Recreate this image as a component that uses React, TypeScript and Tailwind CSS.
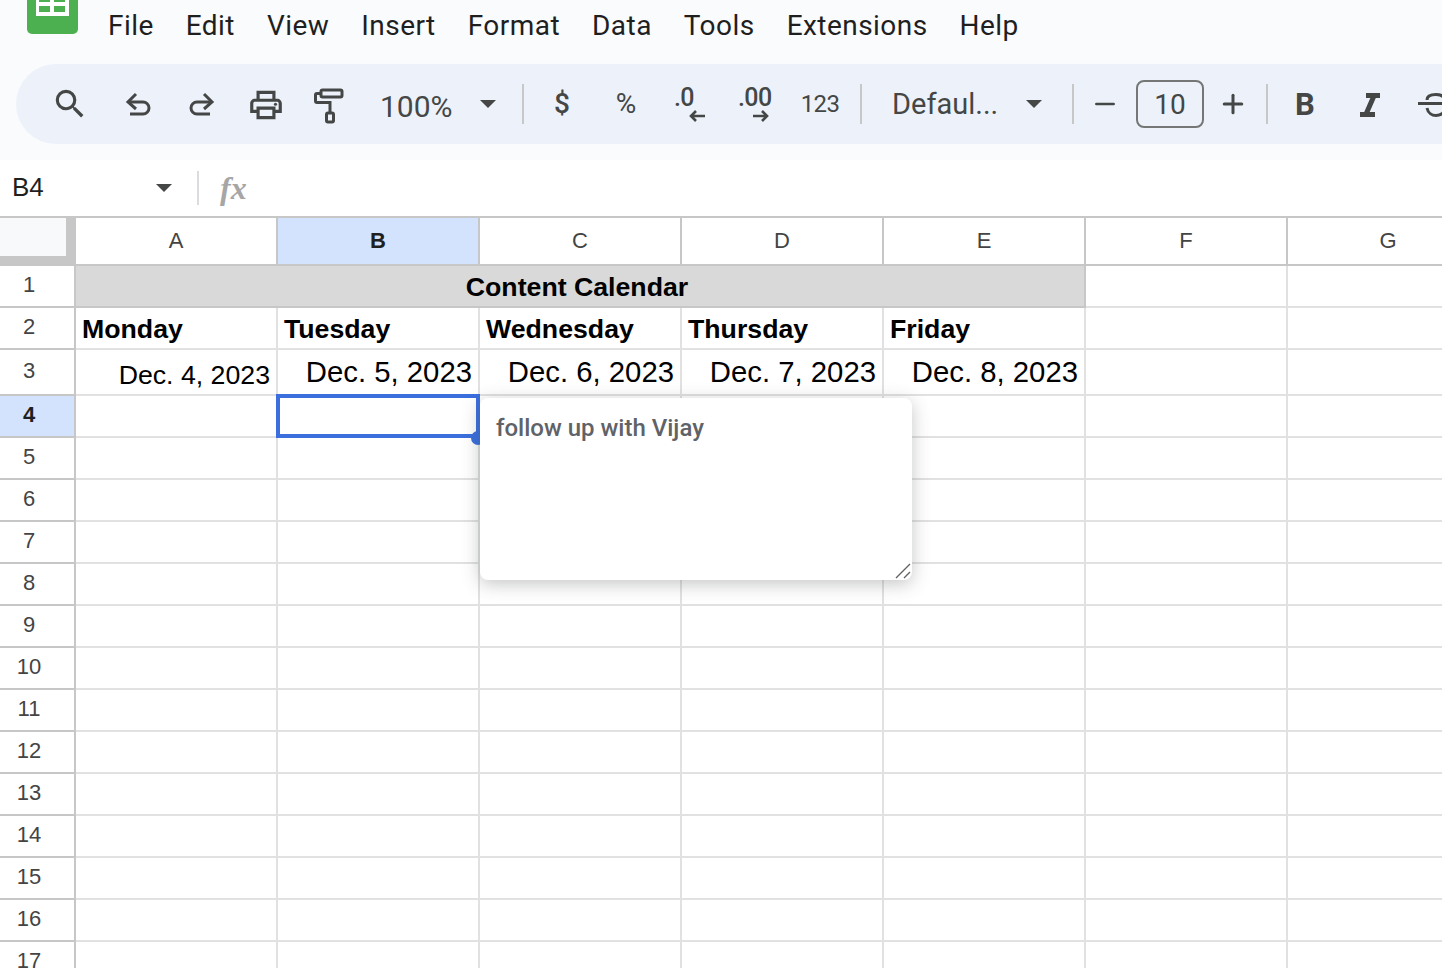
import React from 'react'
import { Plus, Minus } from 'lucide-react'

const menus = ['File', 'Edit', 'View', 'Insert', 'Format', 'Data', 'Tools', 'Extensions', 'Help']
const columns = ['A', 'B', 'C', 'D', 'E', 'F', 'G']
const weekdays = ['Monday', 'Tuesday', 'Wednesday', 'Thursday', 'Friday']
const dates = ['Dec. 4, 2023', 'Dec. 5, 2023', 'Dec. 6, 2023', 'Dec. 7, 2023', 'Dec. 8, 2023']
const emptyRows = [5, 6, 7, 8, 9, 10, 11, 12, 13, 14, 15, 16, 17]

function Caret({ className }: { className?: string }) {
  return (
    <svg width="16" height="8" viewBox="0 0 16 8" className={className}>
      <path d="M0 0h16L8 8z" fill="#444746" />
    </svg>
  )
}

function Sep({ className }: { className?: string }) {
  return <div className={`w-[2px] h-[40px] bg-[#c7c7c7] shrink-0 ${className ?? ''}`} />
}

function ToolIcon({ children }: { children: React.ReactNode }) {
  return (
    <svg width="36" height="36" viewBox="0 0 36 36" fill="none" stroke="#444746" strokeWidth="3">
      {children}
    </svg>
  )
}

function Slot({ className, children }: { className: string; children: React.ReactNode }) {
  return <div className={`h-full flex items-center justify-center shrink-0 ${className}`}>{children}</div>
}

function Logo() {
  return (
    <svg width="51" height="50" viewBox="0 0 51 50" className="shrink-0 self-start -mt-[16px]">
      <path d="M0 0h51v45a5 5 0 0 1-5 5H5a5 5 0 0 1-5-5z" fill="#4caf50" />
      <rect x="9" y="0" width="33" height="32" fill="#fff" />
      <rect x="12" y="10" width="11" height="8" fill="#4caf50" />
      <rect x="27" y="10" width="11" height="8" fill="#4caf50" />
      <rect x="12" y="22" width="11" height="6" fill="#4caf50" />
      <rect x="27" y="22" width="11" height="6" fill="#4caf50" />
    </svg>
  )
}

function DecimalIcon({ label, arrow }: { label: string; arrow: 'left' | 'right' }) {
  return (
    <div className="w-[32px] pt-[2px] flex flex-col items-start">
      <span className="text-[25px] leading-[22px] font-medium text-[#444746] tracking-tight whitespace-nowrap">{label}</span>
      <svg width="18" height="14" viewBox="0 0 18 14" className="ml-[14px]" fill="none" stroke="#444746" strokeWidth="2.6">
        {arrow === 'left' ? <path d="M17 7H3M8 2 3 7l5 5" /> : <path d="M1 7h14M10 2l5 5-5 5" />}
      </svg>
    </div>
  )
}

function Toolbar() {
  return (
    <div className="ml-[16px] h-[80px] rounded-l-[40px] bg-[#edf2fa] flex items-center pl-[22px] overflow-hidden text-[#444746]">
      <Slot className="w-[64px] mr-[4px]">
        <svg width="38" height="38" viewBox="0 0 24 24" fill="#444746">
          <path d="M15.5 14h-.79l-.28-.27A6.471 6.471 0 0 0 16 9.5 6.5 6.5 0 1 0 9.5 16c1.61 0 3.09-.59 4.23-1.57l.27.28v.79l5 4.99L20.49 19l-4.99-5zm-6 0C7.01 14 5 11.99 5 9.5S7.01 5 9.5 5 14 7.01 14 9.5 11.99 14 9.5 14z" />
        </svg>
      </Slot>
      <Slot className="w-[64px] pt-[4px]">
        <ToolIcon>
          <path d="M16 6 8 14l8 7" />
          <path d="M9 14h14a5.5 5.5 0 0 1 0 12H10" />
        </ToolIcon>
      </Slot>
      <Slot className="w-[64px] pt-[4px]">
        <ToolIcon>
          <path d="M20 6l8 8-8 7" />
          <path d="M27 14H13a5.5 5.5 0 0 0 0 12h13" />
        </ToolIcon>
      </Slot>
      <Slot className="w-[64px] pt-[2px]">
        <svg width="38" height="38" viewBox="0 0 24 24" fill="#444746">
          <path d="M19 8h-1V3H6v5H5c-1.66 0-3 1.34-3 3v6h4v4h12v-4h4v-6c0-1.66-1.34-3-3-3zM8 5h8v3H8V5zm8 12v2H8v-4h8v2zm2-2v-2H6v2H4v-4c0-.55.45-1 1-1h14c.55 0 1 .45 1 1v4h-2z" />
          <circle cx="18" cy="11.5" r="1" />
        </svg>
      </Slot>
      <Slot className="w-[62px] pt-[4px]">
        <svg width="32" height="36" viewBox="0 0 32 36" fill="none" stroke="#444746" strokeWidth="3">
          <rect x="8" y="2" width="21" height="7" rx="1.5" />
          <path d="M8 5.5H4a1.5 1.5 0 0 0-1.5 1.5v6A1.5 1.5 0 0 0 4 14.5h13V25" />
          <rect x="13.5" y="25" width="7" height="9" rx="1.5" />
        </svg>
      </Slot>
      <span className="ml-[20px] w-[73px] shrink-0 text-[30px] leading-none pt-[6px] whitespace-nowrap">100%</span>
      <Caret className="ml-[27px] shrink-0" />
      <Sep className="ml-[26px]" />
      <Slot className="w-[64px] ml-[6px] text-[28px] font-medium">$</Slot>
      <Slot className="w-[64px] text-[28px]">%</Slot>
      <Slot className="w-[64px]">
        <DecimalIcon label=".0" arrow="left" />
      </Slot>
      <Slot className="w-[64px]">
        <DecimalIcon label=".00" arrow="right" />
      </Slot>
      <Slot className="w-[68px] text-[24px] tracking-tight">123</Slot>
      <Sep className="ml-[6px]" />
      <span className="ml-[30px] w-[107px] shrink-0 text-[29px] leading-none whitespace-nowrap">Defaul...</span>
      <Caret className="ml-[27px] shrink-0" />
      <Sep className="ml-[30px]" />
      <Slot className="w-[62px]">
        <Minus size={30} strokeWidth={2.4} color="#444746" absoluteStrokeWidth />
      </Slot>
      <div className="w-[68px] h-[48px] shrink-0 rounded-[8px] border-2 border-[#747775] pt-[2px] flex items-center justify-center text-[28px]">
        10
      </div>
      <Slot className="w-[58px]">
        <Plus size={30} strokeWidth={3} color="#444746" absoluteStrokeWidth />
      </Slot>
      <Sep className="ml-[4px]" />
      <Slot className="w-[74px] pt-[2px] text-[31px] font-bold">B</Slot>
      <Slot className="w-[56px] pt-[2px]">
        <svg width="24" height="24" viewBox="0 0 24 24" fill="none" stroke="#444746" strokeWidth="5">
          <path d="M8 2.5h14M2 21.5h15M15.5 4 8.5 20" />
        </svg>
      </Slot>
      <Slot className="w-[68px] pt-[2px]">
        <svg width="36" height="36" viewBox="0 0 36 36" fill="none" stroke="#444746" strokeWidth="3">
          <path d="M4 16.5h32" />
          <path d="M13 13c0-4 4-5.5 9-5.5s8 1.500 9 5.500" />
          <path d="M13 21c1 5 5 7.500 9 7.500 5 0 9-3 9-7.500" />
        </svg>
      </Slot>
    </div>
  )
}

function CornerAndColumns() {
  return (
    <div className="flex h-[50px] border-t-2 border-[#c7c7c7] font-['Liberation_Sans',sans-serif] text-[22px]">
      <div className="w-[76px] shrink-0 bg-[#c7c7c7] pr-[10px] pb-[10px]">
        <div className="h-full bg-[#f8f9fa]" />
      </div>
      {columns.map((col) => (
        <div
          key={col}
          className={
            col === 'B'
              ? 'w-[202px] shrink-0 pb-[2px] flex items-center justify-center bg-[#d3e3fd] font-bold text-[#1f1f1f] border-r-2 border-b-2 border-[#c7c7c7]'
              : 'w-[202px] shrink-0 pb-[2px] flex items-center justify-center text-[#444] border-r-2 border-b-2 border-[#c7c7c7]'
          }
        >
          {col}
        </div>
      ))}
    </div>
  )
}

function RowHead({ n, active }: { n: number; active?: boolean }) {
  return (
    <div
      className={
        active
          ? "w-[76px] shrink-0 flex items-center justify-center pr-[16px] pb-[4px] bg-[#d3e3fd] font-bold text-[#1f1f1f] text-[22px] border-r-2 border-b-2 border-[#c7c7c7] font-['Liberation_Sans',sans-serif]"
          : "w-[76px] shrink-0 flex items-center justify-center pr-[16px] pb-[4px] text-[#444] text-[22px] border-r-2 border-b-2 border-[#c7c7c7] font-['Liberation_Sans',sans-serif]"
      }
    >
      {n}
    </div>
  )
}

function BlankCells({ count }: { count: number }) {
  return (
    <>
      {Array.from({ length: count }).map((_, i) => (
        <div key={i} className="w-[202px] shrink-0 border-r-2 border-b-2 border-[#e1e1e1]" />
      ))}
    </>
  )
}

function Sheet() {
  return (
    <div className="relative font-['Liberation_Sans',sans-serif] text-black">
      <CornerAndColumns />

      <div className="flex h-[42px]">
        <RowHead n={1} />
        <div className="w-[1010px] shrink-0 pr-[6px] pt-[2px] flex items-center justify-center bg-[#d9d9d9] border-r-2 border-b-2 border-[#c7c7c7] text-[26.7px] font-bold">
          Content Calendar
        </div>
        <BlankCells count={2} />
      </div>

      <div className="flex h-[42px]">
        <RowHead n={2} />
        {weekdays.map((day) => (
          <div key={day} className="w-[202px] shrink-0 pl-[6px] pt-[2px] flex items-center border-r-2 border-b-2 border-[#e1e1e1] text-[26.7px] font-bold whitespace-nowrap">
            {day}
          </div>
        ))}
        <BlankCells count={2} />
      </div>

      <div className="flex h-[46px]">
        <RowHead n={3} />
        {dates.map((date, i) => (
          <div
            key={date}
            className={
              i === 0
                ? 'w-[202px] shrink-0 pr-[6px] pt-[6px] flex items-center justify-end border-r-2 border-b-2 border-[#e1e1e1] text-[26.7px] whitespace-nowrap'
                : 'w-[202px] shrink-0 pr-[6px] flex items-center justify-end border-r-2 border-b-2 border-[#e1e1e1] text-[29.3px] whitespace-nowrap'
            }
          >
            {date}
          </div>
        ))}
        <BlankCells count={2} />
      </div>

      <div className="flex h-[42px]">
        <RowHead n={4} active />
        <BlankCells count={7} />
      </div>

      {emptyRows.map((n) => (
        <div key={n} className="flex h-[42px]">
          <RowHead n={n} />
          <BlankCells count={7} />
        </div>
      ))}

      {/* selected cell + fill handle */}
      <div className="absolute left-[276px] top-[178px] w-[204px] h-[44px] border-[4px] border-[#3b6fde]" />
      <div className="absolute left-[471px] top-[215px] w-[14px] h-[14px] rounded-full bg-[#3b6fde]" />

      {/* note popup */}
      <div className="absolute left-[480px] top-[182px] w-[432px] h-[182px] bg-white rounded-[8px] shadow-[0_4px_18px_rgba(60,64,67,0.3)] pl-[16px] pt-[13px] font-['Roboto',sans-serif] text-[24px] leading-[34px] font-medium text-[#5f6368]">
        follow up with Vijay
        <svg width="16" height="16" viewBox="0 0 16 16" className="absolute right-[1px] bottom-[1px]" fill="none" stroke="#5f6368" strokeWidth="1.4">
          <path d="M1 15 15 1M9 15l6-6" />
        </svg>
      </div>
    </div>
  )
}

export default function App() {
  return (
    <div className="w-full h-[968px] overflow-hidden bg-white font-['Roboto',sans-serif]">
      <div className="h-[160px] bg-[#f9fbfd]">
        <div className="h-[64px] flex items-center gap-[32px] pl-[27px] pb-[12px] text-[28px] text-[#1f1f1f]">
          <Logo />
          {menus.map((m) => (
            <span key={m} className={m === 'File' ? 'ml-[-2px] tracking-[0.45px]' : 'tracking-[0.45px]'}>
              {m}
            </span>
          ))}
        </div>
        <Toolbar />
      </div>

      <div className="h-[56px] pb-[2px] flex items-center pl-[12px] font-['Liberation_Sans',sans-serif]">
        <span className="w-[144px] text-[26px] text-[#1f1f1f]">B4</span>
        <Caret className="mt-[2px]" />
        <div className="ml-[25px] mt-[2px] w-[2px] h-[34px] bg-[#dadce0]" />
        <span className="ml-[21px] mt-[2px] text-[32px] font-['Liberation_Serif',serif] italic font-bold text-[#a6a6a6]">fx</span>
      </div>

      <Sheet />
    </div>
  )
}
